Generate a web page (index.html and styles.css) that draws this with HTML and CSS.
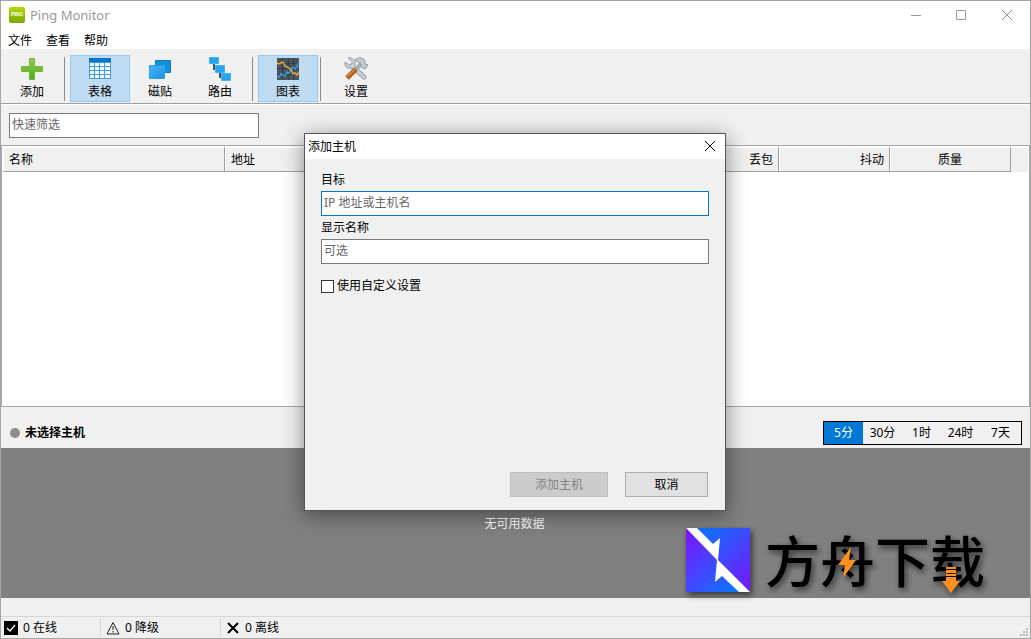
FILE: index.html
```html
<!DOCTYPE html>
<html lang="zh-CN">
<head>
    <meta charset="UTF-8">
    <meta name="viewport" content="width=device-width, initial-scale=1.0">
    <title>Ping Monitor</title>
    <link rel="stylesheet" href="styles.css">
</head>
<body>

    <header class="titlebar">
        <svg class="app-icon" width="16" height="16" viewBox="0 0 16 16" aria-hidden="true">
            <defs>
                <linearGradient id="lime" x1="0" y1="0" x2="0" y2="1">
                    <stop offset="0" stop-color="#b4d800"/>
                    <stop offset="1" stop-color="#79a800"/>
                </linearGradient>
            </defs>
            <rect width="16" height="16" rx="2" fill="url(#lime)"/>
            <text x="8" y="9" text-anchor="middle" class="app-icon-text">PING</text>
        </svg>
        <h1>Ping Monitor</h1>
        <div class="window-controls">
            <button type="button" aria-label="最小化">
                <svg width="12" height="12" viewBox="0 0 12 12"><path d="M2 6.500h10"/></svg>
            </button>
            <button type="button" aria-label="最大化">
                <svg width="12" height="12" viewBox="0 0 12 12"><path d="M1.500 1.500h9v9h-9z"/></svg>
            </button>
            <button type="button" aria-label="关闭">
                <svg width="12" height="12" viewBox="0 0 12 12"><path d="M1 1l10 10M11 1L1 11"/></svg>
            </button>
        </div>
    </header>

    <nav class="menu">
        <a href="#">文件</a>
        <a href="#">查看</a>
        <a href="#">帮助</a>
    </nav>

    <div class="toolbar">
        <button type="button" class="tool">
            <svg width="24" height="24" viewBox="0 0 24 24">
                <defs>
                    <linearGradient id="green" x1="0" y1="0" x2="0" y2="1">
                        <stop offset="0" stop-color="#8fd04e"/>
                        <stop offset="1" stop-color="#55a81f"/>
                    </linearGradient>
                </defs>
                <path d="M9.500 1.500h5v8h8v5h-8v8h-5v-8h-8v-5h8z" fill="url(#green)" stroke="#6cb838"/>
            </svg>
            添加
        </button>
        <span class="separator"></span>
        <button type="button" class="tool active">
            <svg width="24" height="24" viewBox="0 0 24 24">
                <path d="M1 1h22v21H1z" fill="#3d9ce0"/>
                <path d="M1 1h22v4H1z" fill="#0a74c8"/>
                <path d="M2 6h4v3H2zM7 6h4v3H7zM12 6h4v3h-4zM17 6h5v3h-5zM2 10h4v3H2zM7 10h4v3H7zM12 10h4v3h-4zM17 10h5v3h-5zM2 14h4v3H2zM7 14h4v3H7zM12 14h4v3h-4zM17 14h5v3h-5zM2 18h4v3H2zM7 18h4v3H7zM12 18h4v3h-4zM17 18h5v3h-5z" fill="#f4faff"/>
            </svg>
            表格
        </button>
        <button type="button" class="tool">
            <svg width="24" height="24" viewBox="0 0 24 24">
                <defs>
                    <linearGradient id="blue" x1="0" y1="0" x2="1" y2="1">
                        <stop offset="0" stop-color="#4ab4f4"/>
                        <stop offset="1" stop-color="#1a94e6"/>
                    </linearGradient>
                </defs>
                <path d="M7.500 3.500h15v12h-15z" fill="#1290dc" stroke="#0a80cc"/>
                <path d="M1.500 8.500h15v13h-15z" fill="url(#blue)" stroke="#2c9ce8"/>
            </svg>
            磁贴
        </button>
        <button type="button" class="tool">
            <svg width="24" height="24" viewBox="0 0 24 24">
                <path d="M6 7v5h3M12 15v5h3" fill="none" stroke="#48515a" stroke-width="2"/>
                <path d="M1.500 .5h9v6h-9zM7.500 8.500h9v7h-9zM13.500 16.500h9v7h-9z" fill="#26a4f0" stroke="#45b2f4"/>
            </svg>
            路由
        </button>
        <span class="separator"></span>
        <button type="button" class="tool active">
            <svg width="24" height="24" viewBox="0 0 24 24">
                <path d="M1 1h22v22H1z" fill="#4b545e"/>
                <path d="M1 6.500h22M1 11.500h22M1 17.500h22M6.500 1v22M12.500 1v22M17.500 1v22" stroke="#343d48"/>
                <path d="M1 19l2 1 2-3 2 1 2 1 2-4 2 1 2-4 2-2 2 2 2-2 1-4" fill="none" stroke="#3a9bd4" stroke-width="1.500"/>
                <path d="M1 6l2 1 2-1 2-1 2 4 2 1 3 2 2 2 1 3 2-1 2 2 2-3" fill="none" stroke="#d8b040" stroke-width="1.500"/>
            </svg>
            图表
        </button>
        <span class="separator"></span>
        <button type="button" class="tool">
            <svg width="24" height="24" viewBox="0 0 24 24">
                <path d="M8 9l12 11" stroke="#939ea8" stroke-width="5" stroke-linecap="round"/>
                <path d="M4 1l4 3v3L6 8 1 5c-1 4 2 7 6 6 4 0 5-3 4-7C9 1 6 0 4 1z" fill="#c4ccd3" stroke="#9aa5ae"/>
                <path d="M8 9l12 11" stroke="#ccd3d9" stroke-width="3" stroke-linecap="round"/>
                <path d="M3 21l9-9" stroke="#a85c1c" stroke-width="5"/>
                <path d="M3 20l8-8" stroke="#cf8238" stroke-width="2"/>
                <path d="M12 12l6-6" stroke="#a4afb8" stroke-width="4"/>
                <path d="M11 3c3-3 8-3 10 1v3l3 1-3 4-4-2v-3l-3-2z" fill="#c0c9d0" stroke="#8e9aa4"/>
            </svg>
            设置
        </button>
    </div>

    <main>
        <div class="filter">
            <input type="text" placeholder="快速筛选" aria-label="快速筛选">
        </div>

        <div class="hosts">
            <table>
                <thead>
                    <tr>
                        <th class="col-name">名称</th>
                        <th>地址</th>
                        <th class="col-num">丢包</th>
                        <th class="col-num">抖动</th>
                        <th class="col-quality">质量</th>
                        <td class="col-rest"></td>
                    </tr>
                </thead>
            </table>
        </div>

        <div class="chart-header">
            <span class="dot"></span>
            <strong>未选择主机</strong>
            <div class="ranges">
                <button type="button" class="selected">5分</button>
                <button type="button">30分</button>
                <button type="button">1时</button>
                <button type="button">24时</button>
                <button type="button">7天</button>
            </div>
        </div>

        <div class="chart">
            <p>无可用数据</p>
            <div class="brand">
                <svg class="brand-mark" width="64" height="64" viewBox="0 0 64 64" aria-hidden="true">
                    <defs>
                        <linearGradient id="upper" x1="0" y1="0" x2="1" y2="1">
                            <stop offset="0.1" stop-color="#0878ff"/>
                            <stop offset="1" stop-color="#7c12ff"/>
                        </linearGradient>
                        <linearGradient id="lower" x1="0" y1="0" x2="1" y2="1">
                            <stop offset="0" stop-color="#8010ff"/>
                            <stop offset="0.9" stop-color="#0878ff"/>
                        </linearGradient>
                    </defs>
                    <path d="M0 0h64v64z" fill="url(#upper)"/>
                    <path d="M0 0v64h64z" fill="url(#lower)"/>
                    <path d="M0 0h11l16 16 7-6-2 22L64 64H53L36 48l-7 6 2-22z" fill="#fff"/>
                </svg>
                <div class="brand-name">
                    <span>方舟下载</span>
                    <svg class="brand-accents" width="220" height="72" viewBox="0 0 220 72" aria-hidden="true">
                        <path d="M86 19L73 37h7l-2 13 13-18h-7z" fill="#ff9020"/>
                        <path d="M181 39h10v2h-10zM181 42h10v3h-10zM181 46h10v2h-10zM181 49h10v4h4l-9 12-9-12h4z" fill="#ff9020"/>
                    </svg>
                </div>
            </div>
        </div>
    </main>

    <footer class="statusbar">
        <div class="status online">
            <svg width="14" height="14" viewBox="0 0 14 14"><path d="M0 0h14v14H0z"/><path d="M3 7l3 3 5-6" fill="none" stroke="#fff" stroke-width="1.300"/></svg>
            0 在线
        </div>
        <div class="status degraded">
            <svg width="14" height="14" viewBox="0 0 14 14"><path d="M7 1.500l6 11.500H1z" fill="none" stroke="#222"/><path d="M7 5v4M7 10v1.500" stroke="#222"/></svg>
            0 降级
        </div>
        <div class="status offline">
            <svg width="14" height="14" viewBox="0 0 14 14"><path d="M2 2l10 10M12 2L2 12" stroke="#000" stroke-width="2"/></svg>
            0 离线
        </div>
        <svg class="grip" width="9" height="9" viewBox="0 0 9 9" aria-hidden="true">
            <path d="M6 0h2v2H6zM3 3h2v2H3zM6 3h2v2H6zM0 6h2v2H0zM3 6h2v2H3zM6 6h2v2H6z" fill="#bbb"/>
        </svg>
    </footer>

    <dialog open aria-labelledby="dialogTitle">
        <div class="dialog-title">
            <h2 id="dialogTitle">添加主机</h2>
            <button type="button" aria-label="关闭">
                <svg width="12" height="12" viewBox="0 0 12 12"><path d="M1 0l10 10M11 0L1 10"/></svg>
            </button>
        </div>
        <form>
            <label for="target">目标</label>
            <input type="text" id="target" class="focused" placeholder="IP 地址或主机名">
            <label for="displayName">显示名称</label>
            <input type="text" id="displayName" placeholder="可选">
            <div class="check">
                <input type="checkbox" id="custom">
                <label for="custom">使用自定义设置</label>
            </div>
            <div class="actions">
                <button type="submit" class="submit" disabled>添加主机</button>
                <button type="button" class="cancel">取消</button>
            </div>
        </form>
    </dialog>

</body>
</html>
```
FILE: styles.css
```css
* {
    box-sizing: border-box;
}

body {
    display: flex;
    flex-direction: column;
    min-height: 100vh;
    margin: 0;
    border: 1px solid #a5a5a5;
    background: #f0f0f0;
    color: #000;
    font-family: "Noto Sans", "Noto Sans CJK SC", sans-serif;
    font-size: 12px;
    line-height: 16px;
}

button,
input {
    margin: 0;
    font: inherit;
    color: inherit;
}

input::placeholder {
    color: #666;
    opacity: 1;
}

/* title bar and menu */
.titlebar {
    display: flex;
    align-items: center;
    height: 28px;
    padding-left: 8px;
    background: #fff;
    color: #999;
}

.app-icon-text {
    fill: #fff;
    font-family: "Liberation Sans", sans-serif;
    font-size: 5px;
    font-weight: bold;
}

.titlebar h1 {
    margin: 0 0 0 5px;
    font-size: 13px;
    font-weight: normal;
}

.window-controls {
    display: flex;
    margin-left: auto;
}

.window-controls button,
.dialog-title button {
    display: flex;
    align-items: center;
    justify-content: center;
    width: 46px;
    height: 28px;
    padding: 0;
    border: none;
    background: none;
}

.window-controls svg,
.dialog-title svg {
    fill: none;
    stroke: currentColor;
}

.menu {
    display: flex;
    gap: 14px;
    height: 20px;
    padding: 4px 7px 0;
    background: #fff;
}

.menu a {
    color: #000;
    text-decoration: none;
}

/* toolbar */
.toolbar {
    display: flex;
    height: 55px;
    padding: 6px 1px 1px;
    border-bottom: 1px solid #a0a0a0;
}

.tool {
    display: flex;
    flex-direction: column;
    align-items: center;
    gap: 3px;
    width: 60px;
    height: 47px;
    padding: 1px 0 0;
    border: 1px solid transparent;
    background: none;
}

.tool.active {
    border-color: #90c8f6;
    background: #c0dcf3;
}

.separator {
    width: 1px;
    height: 44px;
    margin: 2px 5px 0 2px;
    background: #8c8c8c;
}

/* host list */
main {
    display: flex;
    flex: 1;
    flex-direction: column;
    border-top: 1px solid #fff;
}

.filter {
    padding: 8px 8px 7px;
}

.filter input {
    display: block;
    width: 250px;
    height: 25px;
    padding: 0 2px 2px;
    border: 1px solid #7a7a7a;
    background: #fff;
}

.hosts {
    flex: 1;
    min-height: 200px;
    padding: 0 1px;
    border: 1px solid #a5a8ae;
    background: #fff;
}

.hosts table {
    width: 100%;
    border-spacing: 0;
    table-layout: fixed;
}

.hosts th,
.hosts td {
    height: 26px;
    padding: 0 6px;
    border-top: 2px solid #fff;
    background: #f0f0f0;
}

.hosts th {
    border-right: 1px solid #a0a0a0;
    border-bottom: 1px solid #a0a0a0;
    box-shadow: inset 1px 0 #fff;
    font-weight: normal;
    text-align: left;
}

.hosts .col-name {
    width: 222px;
}

.hosts .col-num {
    width: 111px;
    padding-right: 5px;
    text-align: right;
}

.hosts .col-quality {
    width: 121px;
    text-align: center;
}

.hosts .col-rest {
    width: 17px;
    padding: 0;
}

/* chart */
.chart-header {
    display: flex;
    align-items: center;
    height: 41px;
    padding: 10px 8px 0 9px;
}

.dot {
    width: 10px;
    height: 10px;
    margin-right: 5px;
    border-radius: 50%;
    background: #8c8c8c;
}

.ranges {
    display: flex;
    height: 24px;
    margin-left: auto;
    border: 1px solid #000;
}

.ranges button {
    width: 39px;
    padding: 0;
    border: none;
    background: none;
}

.ranges button:last-child {
    width: 41px;
}

.ranges .selected {
    background: #0078d7;
    color: #fff;
}

.chart {
    position: relative;
    height: 150px;
    background: #808080;
    color: #fff;
    text-align: center;
}

.chart p {
    margin: 0;
    padding: 68px 2px 0 0;
}

.brand {
    position: absolute;
    right: 45px;
    bottom: 6px;
    display: flex;
    align-items: flex-start;
    gap: 15px;
    filter: drop-shadow(2px 3px 3px rgba(0, 0, 0, 0.6));
}

.brand-name {
    position: relative;
    width: 220px;
    color: #000;
    font-family: "Noto Sans CJK SC", sans-serif;
    font-size: 55px;
    font-weight: 500;
    line-height: 60px;
    text-align: left;
    white-space: nowrap;
}

.brand-name span {
    display: block;
}

.brand-accents {
    position: absolute;
    top: 0;
    left: 0;
}

/* status bar */
.statusbar {
    display: flex;
    align-items: center;
    height: 22px;
    margin-top: 18px;
    border-top: 1px solid #d7d7d7;
}

.status {
    display: flex;
    align-items: center;
    gap: 5px;
    width: 120px;
    height: 19px;
    padding-left: 5px;
    border-right: 1px solid #d7d7d7;
}

.status.online {
    width: 100px;
    padding-left: 3px;
}

.status.offline {
    border-right: none;
}

.grip {
    align-self: flex-end;
    margin: 0 1px 1px auto;
}

/* add host dialog */
dialog {
    position: absolute;
    top: 133px;
    right: 1px;
    left: 0;
    display: flex;
    flex-direction: column;
    width: 422px;
    min-height: 378px;
    margin: 0 auto;
    padding: 0;
    border: 1px solid #555;
    background: #f0f0f0;
    color: #000;
    box-shadow: 0 4px 20px rgba(0, 0, 0, 0.45);
}

.dialog-title {
    display: flex;
    align-items: center;
    justify-content: space-between;
    height: 25px;
    padding-left: 3px;
    background: #fff;
}

.dialog-title h2 {
    margin: 0;
    font-size: 12px;
    font-weight: normal;
}

.dialog-title button {
    width: 30px;
    height: 25px;
}

form {
    display: flex;
    flex: 1;
    flex-direction: column;
    padding: 12px 16px 13px;
}

form > label {
    height: 20px;
    padding-top: 1px;
}

form input[type="text"] {
    height: 25px;
    margin-bottom: 3px;
    padding: 0 2px 2px;
    border: 1px solid #7a7a7a;
    background: #fff;
    outline: none;
}

form input.focused[type="text"] {
    border-color: #0078d7;
}

.check {
    display: flex;
    align-items: center;
    gap: 3px;
    margin-top: 11px;
}

.check input {
    appearance: none;
    width: 13px;
    height: 13px;
    border: 1px solid #333;
    background: #fff;
}

.actions {
    display: flex;
    justify-content: flex-end;
    gap: 17px;
    margin-top: auto;
    padding-right: 1px;
}

.actions button {
    width: 83px;
    height: 25px;
    padding: 0;
    border: 1px solid #adadad;
    background: #e1e1e1;
}

.actions .submit {
    width: 98px;
    border-color: #bfbfbf;
    background: #ccc;
    color: #838383;
}
```
